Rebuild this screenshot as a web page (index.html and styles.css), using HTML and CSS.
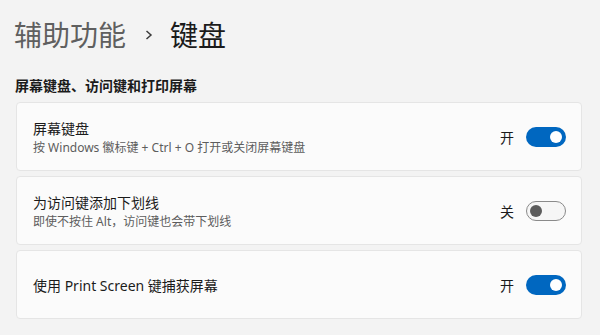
FILE: index.html
```html
<!DOCTYPE html>
<html lang="zh-CN">
<head>
<meta charset="utf-8">
<link rel="stylesheet" href="styles.css">
</head>
<body>
<div class="page">
  <h1 class="title"><span class="crumb">辅助功能</span><svg class="chev" width="8" height="10" viewBox="0 0 8 10"><polyline points="1.5,1 6,5 1.5,9" fill="none" stroke="#3a3a3a" stroke-width="1.5"/></svg><span class="current">键盘</span></h1>
  <h2 class="section">屏幕键盘、访问键和打印屏幕</h2>
  <div class="cards">
    <div class="card">
      <div class="text">
        <div class="name">屏幕键盘</div>
        <div class="desc">按 Windows 徽标键 + Ctrl + O 打开或关闭屏幕键盘</div>
      </div>
      <div class="ctrl"><span class="state">开</span><span class="toggle on"><span class="knob"></span></span></div>
    </div>
    <div class="card">
      <div class="text">
        <div class="name">为访问键添加下划线</div>
        <div class="desc">即使不按住 Alt，访问键也会带下划线</div>
      </div>
      <div class="ctrl"><span class="state">关</span><span class="toggle off"><span class="knob"></span></span></div>
    </div>
    <div class="card">
      <div class="text">
        <div class="name">使用 Print Screen 键捕获屏幕</div>
      </div>
      <div class="ctrl"><span class="state">开</span><span class="toggle on"><span class="knob"></span></span></div>
    </div>
  </div>
</div>
</body>
</html>
```
FILE: styles.css
```css
html, body {
  margin: 0;
  padding: 0;
  background: #f3f3f3;
}
body {
  font-family: "Noto Sans", "Noto Sans CJK SC", sans-serif;
  color: #1b1b1b;
  width: 600px;
  height: 335px;
  overflow: hidden;
}
.page {
  padding: 14px 18px 0 16px;
}
.title {
  margin: 0;
  font-family: "Noto Sans CJK SC", sans-serif;
  font-weight: 400;
  font-size: 28px;
  line-height: 40px;
  display: flex;
  align-items: center;
  margin-left: -2px;
}
.crumb { color: #5f5f5f; }
.chev {
  margin: 0 17px 0 19px;
  position: relative;
  top: 1px;
}
.current { color: #1b1b1b; }
.section {
  margin: 21px 0 0 -1px;
  font-family: "Noto Sans CJK SC", sans-serif;
  font-size: 14px;
  font-weight: 600;
  line-height: 20px;
}
.cards {
  margin-top: 7px;
  display: flex;
  flex-direction: column;
  gap: 5px;
}
.card {
  height: 67px;
  background: #fbfbfb;
  border: 1px solid #e5e5e5;
  border-radius: 4px;
  display: flex;
  align-items: center;
  justify-content: space-between;
  padding: 0 15px 0 16px;
}
.text {
  padding-top: 2px;
}
.name {
  font-size: 14px;
  line-height: 20px;
  color: #1b1b1b;
}
.desc {
  font-size: 12px;
  line-height: 17px;
  color: #5d5d5d;
}
.ctrl {
  display: flex;
  align-items: center;
}
.state {
  font-family: "Noto Sans CJK SC", sans-serif;
  font-size: 14px;
  margin-right: 12px;
}
.toggle {
  width: 40px;
  height: 20px;
  border-radius: 10px;
  box-sizing: border-box;
  display: flex;
  align-items: center;
}
.toggle.on {
  background: #0067c0;
  justify-content: flex-end;
  padding-right: 4px;
}
.toggle.on .knob {
  width: 12px;
  height: 12px;
  background: #ffffff;
}
.toggle.off {
  background: #f6f6f6;
  border: 1px solid #8a8a8a;
  padding-left: 3px;
}
.toggle.off .knob {
  width: 12px;
  height: 12px;
  background: #5c5c5c;
}
.knob {
  border-radius: 50%;
}
```
